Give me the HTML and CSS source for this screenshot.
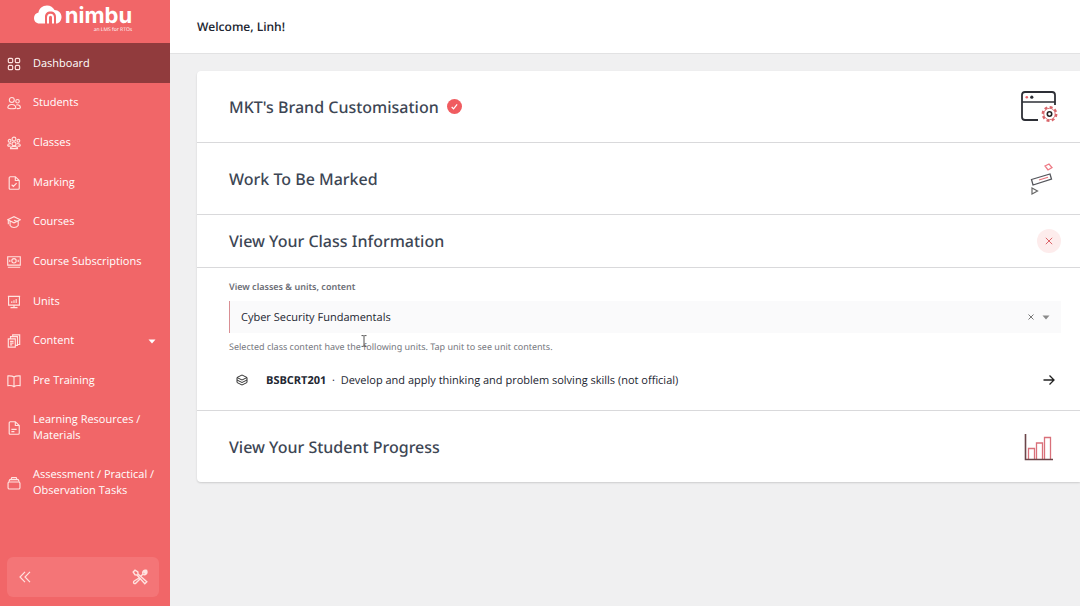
FILE: index.html
```html
<!DOCTYPE html>
<html lang="en">
<head>
  <meta charset="UTF-8">
  <meta name="viewport" content="width=device-width, initial-scale=1.0">
  <title>Dashboard</title>
  <link rel="stylesheet" href="styles.css">
</head>
<body>

  <aside class="sidebar">
    <a href="#" class="logo">
      <svg class="logo-mark" viewBox="0 0 28 19">
        <path d="M5.500 18.500C2 18.500 0 16 0 13C0 10 2 8 4.500 7.500C5 3.500 8.500 0.500 13 0.500C16.500 0.500 19 2.500 20.500 5C24.500 5 27.500 8 27.500 12C27.500 15.800 25 18.500 22 18.500V12C22 8.500 20 6.500 16.500 6.500C13 6.500 11 8.500 11 12V18.500Z" fill="#fff"/>
        <path d="M14 18.500V12.500C14 8.700 19 8.700 19 12.500V18.500" fill="none" stroke="#fff" stroke-width="2"/>
      </svg>
      <span class="logo-text">
        <span class="logo-name">nimbu</span>
        <span class="logo-tag">an LMS for RTOs</span>
      </span>
    </a>

    <nav class="menu">
      <a href="#" class="menu-item active">
        <svg class="icon" viewBox="0 0 16 16"><rect x="1.500" y="1.500" width="5" height="5" rx="1.500"/><rect x="9.500" y="1.500" width="5" height="5" rx="1.500"/><rect x="1.500" y="9.500" width="5" height="5" rx="1.500"/><rect x="9.500" y="9.500" width="5" height="5" rx="1.500"/></svg>
        <span>Dashboard</span>
      </a>
      <a href="#" class="menu-item">
        <svg class="icon" viewBox="0 0 16 16"><circle cx="5.500" cy="4.500" r="2.800"/><circle cx="12" cy="6" r="2"/><path d="M1 13.500C1 8.500 10 8.500 10 13.500C10 15 1 15 1 13.500ZM10.500 10.200C13 9.500 15.300 10.800 15.300 13C15.300 14.300 13 14.500 11 14.300"/></svg>
        <span>Students</span>
      </a>
      <a href="#" class="menu-item">
        <svg class="icon" viewBox="0 0 16 16"><circle cx="8" cy="3.500" r="2.200"/><circle cx="3" cy="5.500" r="1.600"/><circle cx="13" cy="5.500" r="1.600"/><circle cx="8" cy="9" r="2.300"/><path d="M1 11.500C0.500 9.500 2 8.500 4.500 8.700M15 11.500C15.500 9.500 14 8.500 11.500 8.700M4 14.500C3 11 13 11 12 14.500ZM1 11.500H4M12 11.500H15"/></svg>
        <span>Classes</span>
      </a>
      <a href="#" class="menu-item">
        <svg class="icon" viewBox="0 0 16 16"><path d="M2.500 2C2.500 1.300 3 0.800 3.700 0.800H9.500L14 5.200V14C14 14.700 13.500 15.200 12.800 15.200H3.700C3 15.200 2.500 14.700 2.500 14ZM9.500 1V5.200H13.700M5.300 10L7.300 12L11 8.200"/></svg>
        <span>Marking</span>
      </a>
      <a href="#" class="menu-item">
        <svg class="icon" viewBox="0 0 16 16"><path d="M0.800 5.500L8 2L15.200 5.500L8 9ZM3.500 7V12C5.500 15 10.500 15 12.800 12V7M1.500 6V10.500M8 6L12.500 7.500"/></svg>
        <span>Courses</span>
      </a>
      <a href="#" class="menu-item">
        <svg class="icon" viewBox="0 0 16 16"><path d="M0.800 2H15.200V11.500H0.800ZM1 14H15"/><circle cx="8" cy="6.700" r="2.500"/><path d="M3.200 5.500V8M12.800 5.500V8"/></svg>
        <span>Course Subscriptions</span>
      </a>
      <a href="#" class="menu-item">
        <svg class="icon" viewBox="0 0 16 16"><path d="M1 1.500H15M1.800 1.500V11.500H14.200V1.500M8 11.500V14.500M4 14.500H12M5.500 9V7M8 9V6M10.500 9V4.500"/></svg>
        <span>Units</span>
      </a>
      <a href="#" class="menu-item">
        <svg class="icon" viewBox="0 0 16 16"><path d="M1.500 5.500H9.500V15H1.500ZM4 5.500V3H12V13H9.500M6.500 3V1H14.500V12H12M3.500 8.500H7.500M3.500 10.500H7.500M3.500 12.500H6"/></svg>
        <span>Content</span>
        <svg class="menu-caret" viewBox="0 0 8 5"><path d="M0.500 0.500H7.500L4 4.500Z"/></svg>
      </a>
      <a href="#" class="menu-item">
        <svg class="icon" viewBox="0 0 16 16"><path d="M8 3.500C6.500 2.300 4 2 1 2.200V13.300C4 13 6.500 13.300 8 14.500C9.500 13.300 12 13 15 13.300V2.200C12 2 9.500 2.300 8 3.500ZM8 3.500V14.500"/></svg>
        <span>Pre Training</span>
      </a>
      <a href="#" class="menu-item tall">
        <svg class="icon" viewBox="0 0 16 16"><path d="M2.500 2C2.500 1.300 3 0.800 3.700 0.800H9.500L14 5.200V14C14 14.700 13.500 15.200 12.800 15.200H3.700C3 15.200 2.500 14.700 2.500 14ZM9.500 1V5.200H13.700M5 9.500H11M5 12.200H8.500"/></svg>
        <span>Learning Resources / Materials</span>
      </a>
      <a href="#" class="menu-item tall">
        <svg class="icon" viewBox="0 0 16 16"><rect x="1.200" y="6.800" width="13.600" height="8" rx="1.500"/><path d="M2 6.500L3.200 4.200H12.800L14 6.500M4.500 4L5.500 1.800H10.500L11.500 4"/></svg>
        <span>Assessment / Practical / Observation Tasks</span>
      </a>
    </nav>

    <div class="sidebar-footer">
      <button type="button" class="icon-btn" aria-label="Collapse menu">
        <svg class="icon-collapse" viewBox="0 0 12 12"><path d="M6 0.800L1 6L6 11.200M11 0.800L6 6L11 11.200"/></svg>
      </button>
      <button type="button" class="icon-btn" aria-label="Tools">
        <svg class="icon-tools" viewBox="0 0 16 16"><path d="M1.200 3L3 1.200L5.800 3L6 5L14.800 12.800L12.800 14.800L5 6L3 5.800ZM9 7L11 5C10 2.500 12 0.800 14 1.300L12.200 3.200L13 4.200L14.800 2.200C15.500 4.500 13.500 6.200 11.500 5.500M7 9L2.200 12C0.500 13.500 2.500 15.700 4 14L8 10"/></svg>
      </button>
    </div>
  </aside>

  <div class="page">
    <header class="topbar">
      <h1 class="welcome">Welcome, Linh!</h1>
    </header>

    <main class="panel">
      <section class="panel-row">
        <h2 class="panel-title">MKT's Brand Customisation
          <svg class="badge" viewBox="0 0 16 16"><circle cx="8" cy="8" r="8" fill="#f05c60"/><path d="M5 8.500L7 10.500L10.800 5.800" fill="none" stroke="#fff" stroke-width="1.300"/></svg>
        </h2>
        <svg class="art-brand" viewBox="0 0 38 34">
          <g fill="none" stroke="#2d2f36" stroke-width="1.800">
            <path d="M18 30H5C3 30 2 29 2 27V5C2 3 3 2 5 2H32C34 2 35 3 35 5V15"/>
            <path d="M2 12H35" stroke-width="1.500"/>
          </g>
          <circle cx="6.800" cy="7.200" r="1.300" fill="#e8636a"/>
          <circle cx="11.800" cy="7.200" r="1.600" fill="#2d2f36"/>
          <circle cx="29.500" cy="24" r="6.700" fill="#fff" stroke="#d9656a" stroke-width="2.400" stroke-dasharray="2.900 2.360"/>
          <circle cx="29.500" cy="24" r="5.700" fill="#fff" stroke="#d9656a" stroke-width="0.900"/>
          <circle cx="29.500" cy="24" r="2.200" fill="none" stroke="#222" stroke-width="1.600"/>
        </svg>
      </section>

      <section class="panel-row">
        <h2 class="panel-title">Work To Be Marked</h2>
        <svg class="art-marking" viewBox="0 0 24 32">
          <path d="M15 3L19 1L22 4.500L18 7Z" fill="none" stroke="#ee7a85" stroke-width="1.300"/>
          <path d="M1.500 16.500L20 11L21.500 16L3 22Z" fill="none" stroke="#55565c" stroke-width="1.300"/>
          <path d="M9 17L18 14.300" stroke="#e8707a" stroke-width="1.200"/>
          <path d="M2 25L7.500 28L2 31Z" fill="none" stroke="#666" stroke-width="1.200"/>
        </svg>
      </section>

      <section class="panel-row short">
        <h2 class="panel-title">View Your Class Information</h2>
        <button type="button" class="close-btn" aria-label="Close">
          <svg viewBox="0 0 8 8"><path d="M0.800 0.800L7.200 7.200M7.200 0.800L0.800 7.200"/></svg>
        </button>
      </section>

      <section class="class-info">
        <label class="field-label" for="class-select">View classes &amp; units, content</label>
        <div class="field">
          <select id="class-select" class="field-select">
            <option>Cyber Security Fundamentals</option>
          </select>
          <button type="button" class="clear-btn" aria-label="Clear">
            <svg viewBox="0 0 6 6"><path d="M0.500 0.500L5.500 5.500M5.500 0.500L0.500 5.500"/></svg>
          </button>
          <svg class="field-caret" viewBox="0 0 8 5"><path d="M0.500 0.500H7.500L4 4.500Z"/></svg>
        </div>
        <p class="hint">Selected class content have the following units. Tap unit to see unit contents.
          <svg class="text-cursor" viewBox="0 0 6 12"><path d="M0.500 0.600H2.300L3 1.200L3.700 0.600H5.500M3 1.200V10.800M0.500 11.400H2.300L3 10.800L3.700 11.400H5.500"/></svg>
        </p>
        <a href="#" class="unit">
          <svg class="unit-icon" viewBox="0 0 12 12"><path d="M6 1L11 3.500L6 6L1 3.500ZM1 3.500V8.500L6 11L11 8.500V3.500M1 6L6 8.500L11 6"/></svg>
          <span class="unit-name"><b>BSBCRT201</b> &nbsp;·&nbsp; Develop and apply thinking and problem solving skills (not official)</span>
          <svg class="unit-arrow" viewBox="0 0 12 12"><path d="M0.500 6H11M6.500 1.500L11 6L6.500 10.500"/></svg>
        </a>
      </section>

      <section class="panel-row">
        <h2 class="panel-title">View Your Student Progress</h2>
        <svg class="art-progress" viewBox="0 0 30 28">
          <g fill="none" stroke="#d9707a" stroke-width="1.300">
            <path d="M4.500 26V15.500H10.500V26M12.500 26V10H18.500V26M20.500 26V4.500H26.500V26"/>
          </g>
          <path d="M1.500 1V26.500H29" fill="none" stroke="#6b4549" stroke-width="1.600"/>
        </svg>
      </section>
    </main>
  </div>

</body>
</html>
```

FILE: styles.css
```css
* {
  margin: 0;
  padding: 0;
  box-sizing: border-box;
}

body {
  display: flex;
  min-height: 100vh;
  background: #f0f0f1;
  font-family: "Open Sans", "Noto Sans", sans-serif;
  font-size: 11px;
  color: #222631;
  text-rendering: geometricPrecision;
}

a {
  color: inherit;
  text-decoration: none;
}

button {
  display: flex;
  align-items: center;
  justify-content: center;
  border: none;
  background: none;
  cursor: pointer;
}

/* sidebar */
.sidebar {
  display: flex;
  flex-direction: column;
  flex: none;
  width: 170px;
  min-height: 100vh;
  background: #f16668;
  color: #fff;
}

.logo {
  display: flex;
  justify-content: center;
  gap: 3px;
  height: 43px;
  padding: 5px 4px 0 0;
}

.logo-mark {
  width: 28px;
  height: 19px;
}

.logo-text {
  display: flex;
  flex-direction: column;
  align-items: flex-end;
}

.logo-name {
  font-family: Inter, sans-serif;
  font-size: 22px;
  font-weight: 700;
  line-height: 22px;
}

.logo-tag {
  font-size: 5px;
  line-height: 6px;
}

.menu {
  display: flex;
  flex-direction: column;
  flex: 1;
}

.menu-item {
  display: flex;
  align-items: center;
  flex: 1 0 39px;
  gap: 12px;
  padding: 2px 14px 0 7px;
  font-weight: 500;
  line-height: 16px;
}

.menu-item.tall {
  flex-basis: 55px;
  padding-top: 0;
}

.menu-item.active {
  background: #913b3d;
}

.icon {
  flex: none;
  width: 14px;
  height: 14px;
  fill: none;
  stroke: #ffe3e0;
  stroke-width: 1.3;
}

.menu-caret {
  width: 8px;
  height: 5px;
  margin-left: auto;
  fill: #fff;
}

.sidebar-footer {
  display: flex;
  align-items: center;
  justify-content: space-between;
  height: 40px;
  margin: 46px 11px 9px 7px;
  padding: 0 11px 0 12px;
  border-radius: 6px;
  background: #f47577;
}

.icon-collapse,
.icon-tools {
  width: 12px;
  height: 12px;
  fill: none;
  stroke: #ffe3e0;
  stroke-width: 1.2;
}

.icon-tools {
  width: 16px;
  height: 16px;
  stroke-width: 1.4;
}

/* page */
.page {
  flex: 1;
  min-width: 0;
}

.topbar {
  display: flex;
  align-items: center;
  height: 54px;
  padding: 0 27px;
  border-bottom: 1px solid #e2e2e3;
  background: #fff;
}

.welcome {
  font-size: 12px;
  font-weight: 600;
}

.panel {
  margin: 17px 0 0 27px;
  border-radius: 4px 0 0 4px;
  background: #fff;
  box-shadow: 0 1px 2px rgba(0, 0, 0, 0.15);
}

.panel-row {
  display: flex;
  align-items: center;
  justify-content: space-between;
  height: 72px;
  padding: 0 22px 0 32px;
  border-bottom: 1px solid #d9d9db;
}

.panel-row.short {
  height: 53px;
  padding-right: 19px;
}

.panel-row:last-child {
  height: 71px;
  border-bottom: none;
}

.panel-title {
  display: flex;
  align-items: center;
  gap: 8px;
  font-family: "Noto Sans", sans-serif;
  font-size: 16px;
  font-weight: 500;
  color: #3d4654;
}

.badge {
  width: 15px;
  height: 15px;
}

.art-brand {
  width: 38px;
  height: 34px;
}

.art-marking {
  width: 24px;
  height: 32px;
  margin-right: 4px;
}

.art-progress {
  width: 30px;
  height: 28px;
  margin-right: 4px;
}

.close-btn {
  width: 24px;
  height: 24px;
  border-radius: 50%;
  background: #fdecec;
}

.close-btn svg {
  width: 8px;
  height: 8px;
  stroke: #dc6469;
}

.class-info {
  padding: 11px 19px 12px 32px;
  border-bottom: 1px solid #d9d9db;
}

.field-label {
  display: block;
  font-family: "Noto Sans", sans-serif;
  font-size: 9px;
  font-weight: 600;
  line-height: 16px;
  color: #6b6d75;
}

.field {
  display: flex;
  align-items: center;
  height: 32px;
  margin: 6px 0 6px;
  padding-right: 11px;
  border-left: 1px solid #d98f94;
  background: #fafafb;
}

.field-select {
  flex: 1;
  height: 32px;
  padding-left: 11px;
  border: none;
  appearance: none;
  background: none;
  font: inherit;
  font-weight: 500;
  text-rendering: inherit;
  color: #222631;
}

.clear-btn {
  width: 14px;
  height: 14px;
  margin-right: 4px;
}

.clear-btn svg {
  width: 6px;
  height: 6px;
  stroke: #777;
}

.field-caret {
  width: 8px;
  height: 5px;
  fill: #8a8a8a;
}

.hint {
  position: relative;
  font-family: "Noto Sans", sans-serif;
  font-size: 9px;
  line-height: 16px;
  color: #74767d;
}

.text-cursor {
  position: absolute;
  top: -4px;
  left: 132px;
  width: 6px;
  height: 12px;
  fill: none;
  stroke: #555;
}

.unit {
  display: flex;
  align-items: center;
  height: 36px;
  margin-top: 7px;
  padding: 0 6px 0 7px;
}

.unit-icon {
  width: 12px;
  height: 12px;
  margin-right: 18px;
  fill: none;
  stroke: #333;
}

.unit-name {
  flex: 1;
  font-weight: 500;
}

.unit-arrow {
  width: 12px;
  height: 12px;
  fill: none;
  stroke: #222;
  stroke-width: 1.3;
}
```
